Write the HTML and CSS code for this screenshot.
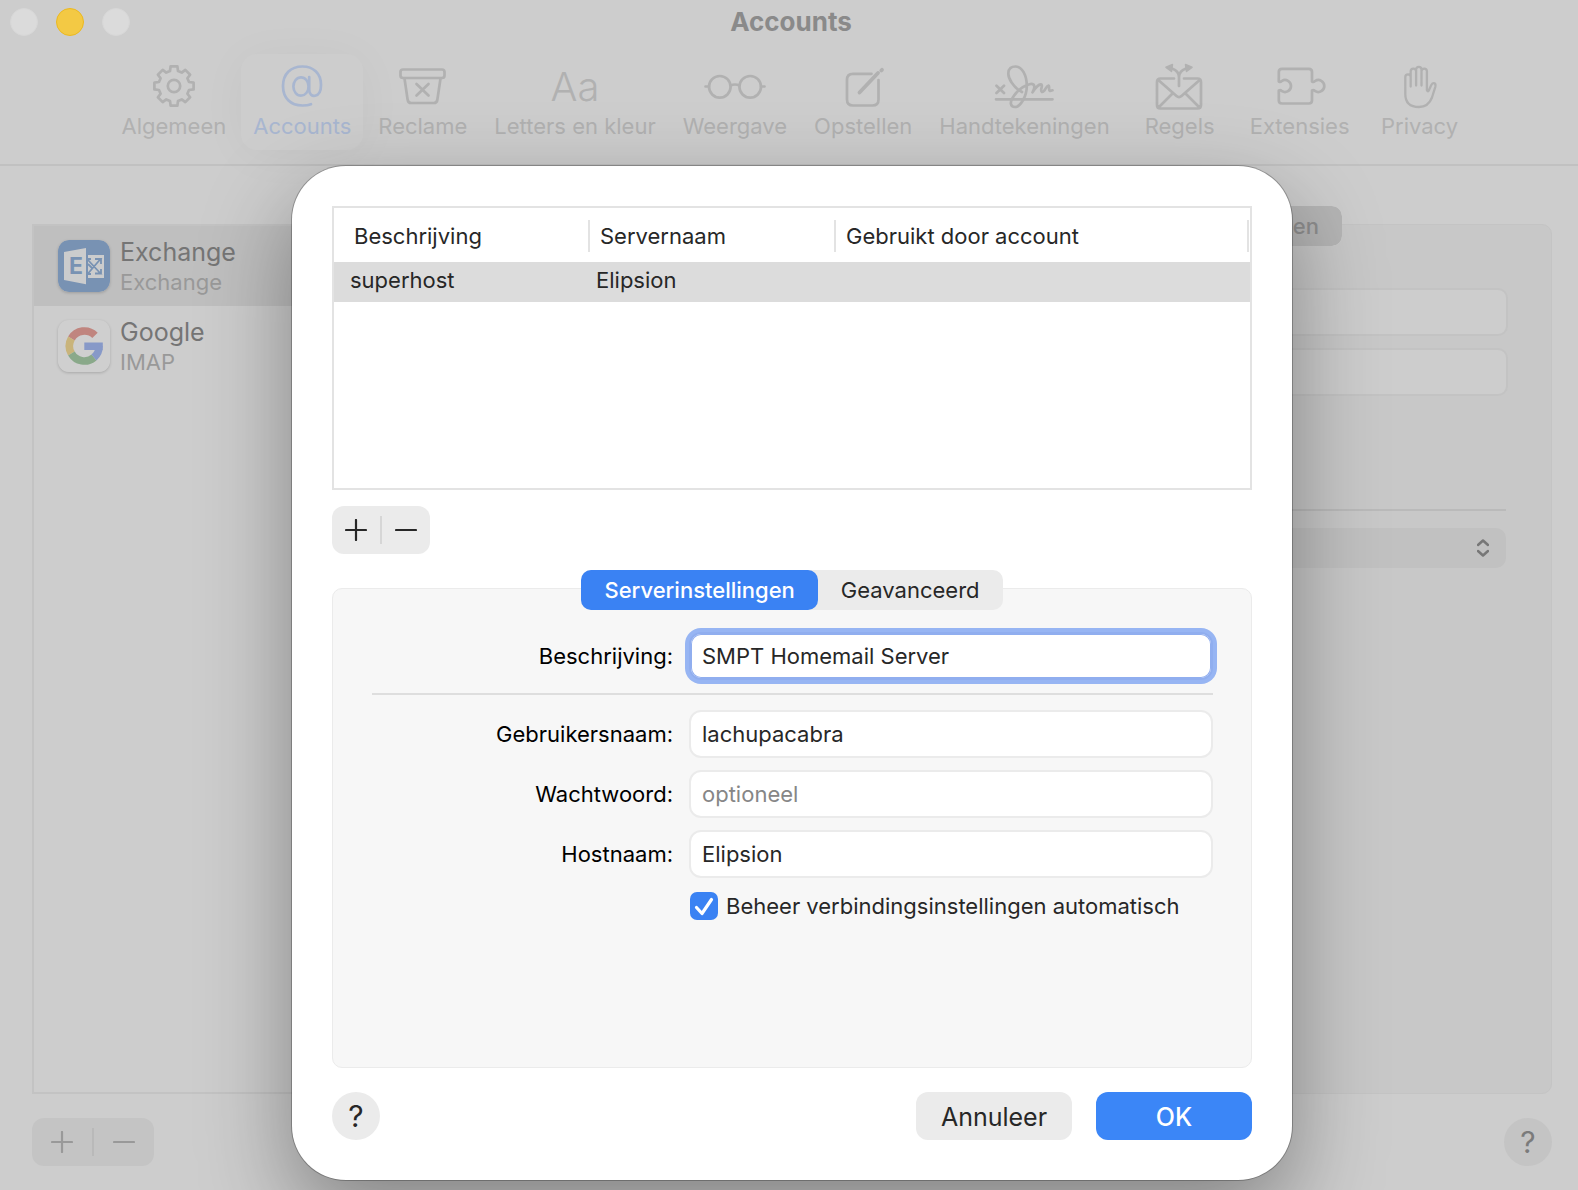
FILE: index.html
```html
<!DOCTYPE html>
<html lang="nl">
<head>
<meta charset="utf-8">
<meta name="viewport" content="width=device-width, initial-scale=1">
<title>Accounts</title>
<link rel="stylesheet" href="styles.css">
</head>
<body>
<div class="window">
  <header class="titlebar">
    <div class="lights">
      <span class="light"></span>
      <span class="light light-minimize"></span>
      <span class="light"></span>
    </div>
    <h1 class="title">Accounts</h1>
  </header>

  <nav class="toolbar">
    <button class="tool" type="button">
      <svg class="tool-icon" viewBox="0 0 64 48"><path d="M28.6 4.4H35.4L36 9L39.75 10.6L43.3 7.9L48.1 12.7L45.4 16.25L47 20L51.6 20.6V27.4L47 28L45.4 31.75L48.1 35.3L43.3 40.1L39.75 37.4L36 39L35.4 43.6H28.6L28 39L24.25 37.4L20.7 40.1L15.9 35.3L18.6 31.75L17 28L12.4 27.4V20.6L17 20L18.6 16.25L15.9 12.7L20.7 7.9L24.25 10.6L28 9Z"/><circle cx="32" cy="24" r="6.2"/></svg>
      <span>Algemeen</span>
    </button>
    <button class="tool tool-active" type="button">
      <svg class="tool-icon" viewBox="0 0 64 48"><ellipse cx="31" cy="24.5" rx="7.6" ry="9.2"/><path d="M39.2 15V28C39.2 36.500 51 36.500 51 23C51 11 43 4.500 32.500 4.500C20.500 4.500 13 12 13 24C13 36 20.500 43.500 32.500 43.500C36 43.500 39 43 41 42.200"/></svg>
      <span>Accounts</span>
    </button>
    <button class="tool" type="button">
      <svg class="tool-icon" viewBox="0 0 64 48"><rect x="9.500" y="7.500" width="44" height="8.500" rx="2.500"/><path d="M13.500 16.500L16.600 37.500Q17 41 20.300 41H42.700Q46 41 46.400 37.500L49.500 16.500M25.500 22L37.500 33.500M37.500 22L25.500 33.500"/></svg>
      <span>Reclame</span>
    </button>
    <button class="tool" type="button">
      <span class="tool-icon tool-letters">Aa</span>
      <span>Letters en kleur</span>
    </button>
    <button class="tool" type="button">
      <svg class="tool-icon" viewBox="0 0 64 48"><circle cx="16.800" cy="24.800" r="10.800"/><circle cx="47.200" cy="24.800" r="10.800"/><path d="M27.500 23.500Q32 21.500 36.500 23.500M2.500 24.500H6M58 24.500H61.500"/></svg>
      <span>Weergave</span>
    </button>
    <button class="tool" type="button">
      <svg class="tool-icon" viewBox="0 0 64 48"><path d="M40.500 11.800H22Q16 11.800 16 17.800V37.500Q16 43.500 22 43.500H41.500Q47.500 43.500 47.500 37.500V18"/><path d="M28.500 30.500L47 11" stroke-width="3.800"/><path d="M50.300 8.500L51 7.800" stroke-width="3.800"/></svg>
      <span>Opstellen</span>
    </button>
    <button class="tool" type="button">
      <svg class="tool-icon" viewBox="0 0 64 48"><path d="M4 37.300H60.500M4.500 23.800L12 31M12 23.800L4.500 31"/><path d="M30 30C20.500 25 16.300 16 16.300 11.500C16.300 6.500 19.500 4.500 23.500 4.500C30 4.500 34.800 13 34.800 24C34.800 34 28.500 45 23 45C18 45 18 40 20.500 36C24.500 29.500 31 24 37.500 22.200C43 21 43.500 25 40.500 30.300C43.500 25.500 47.500 21.500 49.500 22.500C51 24.500 47.500 28.500 50 30C53 30.500 53.500 24 56.500 23.500C58 24 56 28 58 29L60.500 28.300"/></svg>
      <span>Handtekeningen</span>
    </button>
    <button class="tool" type="button">
      <svg class="tool-icon" viewBox="0 0 64 48"><path d="M26 16.500H12.500Q9 16.500 9 20V43Q9 46.500 12.500 46.500H49.500Q53 46.500 53 43V20Q53 16.500 49.500 16.500H36M10 17.800L28.500 34Q31 36.200 33.500 34L52 17.800M10.500 45.500L24.500 31.500M51.500 45.500L37.500 31.500M31 24V15Q31 9 24 6.500M31 15Q31 9 38 6.500"/><path class="solid" d="M18 5.300L24.500 2.500L23.500 9.500ZM44 5.300L37.500 2.500L38.500 9.500Z"/></svg>
      <span>Regels</span>
    </button>
    <button class="tool" type="button">
      <svg class="tool-icon" viewBox="0 0 64 48"><path d="M10.800 19V10Q10.800 6.800 14 6.800H40.800Q44 6.800 44 10V19.500Q46 20.500 47.300 18.800A6 6 0 1 1 47.300 29.200Q46 27.500 44 28.500V38.300Q44 41.500 40.800 41.500H14Q10.800 41.500 10.800 38.300V28.500Q12.800 27.500 14 29.200A6 6 0 1 0 14 18.800Q12.800 20.500 10.800 19.500Z"/></svg>
      <span>Extensies</span>
    </button>
    <button class="tool" type="button">
      <svg class="tool-icon" viewBox="0 0 64 48"><path stroke-width="2.300" d="M17.300 32V15A2.700 2.700 0 0 1 22.700 15V24.500M22.700 15V9.300A2.700 2.700 0 0 1 28.100 9.300V23.500M28.100 9.300V7.500A2.700 2.700 0 0 1 33.500 7.500V23.500M33.500 9.300A2.700 2.700 0 0 1 38.900 9.300V28Q39.900 30.500 41 28L43.300 23Q44.800 20.500 46.500 21.300Q48 22.200 47.300 24.800L44 35.500Q40.300 45 31 45Q17.300 45 17.300 32"/></svg>
      <span>Privacy</span>
    </button>
  </nav>

  <main class="content">
    <section class="sidebar">
      <ul class="accounts">
        <li class="account account-selected">
          <svg class="account-icon" viewBox="0 0 52 52"><rect width="52" height="52" rx="11" fill="#7892b3"/><path fill="#cbcccd" d="M6 12L28 8V44.300L6 40ZM30 15H46V38H30Z"/><text x="11" y="34" class="logo-letter">E</text><path fill="none" stroke="#7892b3" stroke-width="1.800" d="M30 20L42.500 33.500H37M43 29V34M30 33.500L42.500 19H37M43 24V18M30 24L34 28M33 19H30M33 34H30"/></svg>
          <div class="account-text"><span class="account-name">Exchange</span><span class="account-kind">Exchange</span></div>
        </li>
        <li class="account">
          <svg class="account-icon" viewBox="0 0 52 52"><rect width="52" height="52" rx="11" fill="#cfcfcf"/><g fill="none" stroke-width="7.600"><path stroke="#c0857f" d="M37 15.400A15 15 0 0 0 13.400 18.500"/><path stroke="#c9b47b" d="M13.400 18.500A15 15 0 0 0 13.400 33.500"/><path stroke="#8aa98a" d="M13.400 33.500A15 15 0 0 0 36 37.500"/><path stroke="#8799c8" d="M36 37.500A15 15 0 0 0 41.200 26.300M26.300 26.300H44.800"/></g></svg>
          <div class="account-text"><span class="account-name">Google</span><span class="account-kind">IMAP</span></div>
        </li>
      </ul>
      <div class="stepper stepper-wide">
        <button class="step" type="button" aria-label="Account toevoegen"><svg viewBox="0 0 22 22"><path d="M11 1V21M1 11H21"/></svg></button>
        <button class="step" type="button" aria-label="Account verwijderen"><svg viewBox="0 0 22 22"><path d="M1 11H21"/></svg></button>
      </div>
    </section>

    <section class="detail">
      <div class="tabs tabs-dim">
        <button class="tab tab-current" type="button" aria-label="Serverinstellingen">en</button>
      </div>
      <div class="detail-box">
        <input class="dim-field" type="text" aria-label="Gebruikersnaam" disabled>
        <input class="dim-field" type="text" aria-label="Wachtwoord" disabled>
        <hr class="dim-rule">
        <div class="dim-select-wrap">
          <select class="dim-select" aria-label="Uitgaande mail" disabled><option></option></select>
          <svg class="dim-chevrons" viewBox="0 0 12 18"><path d="M1 6L6 1.500L11 6M1 12L6 16.500L11 12"/></svg>
        </div>
      </div>
      <button class="help help-dim" type="button" aria-label="Help">?</button>
    </section>
  </main>
</div>

<div class="overlay">
  <form class="sheet">
    <div class="table-box">
      <table class="servers">
        <colgroup><col class="col-a"><col class="col-b"><col></colgroup>
        <thead>
          <tr><th><div class="head">Beschrijving</div></th><th><div class="head">Servernaam</div></th><th><div class="head">Gebruikt door account</div></th></tr>
        </thead>
        <tbody>
          <tr><td>superhost</td><td>Elipsion</td><td></td></tr>
        </tbody>
      </table>
    </div>

    <div class="stepper">
      <button class="step" type="button" aria-label="Server toevoegen"><svg viewBox="0 0 22 22"><path d="M11 1V21M1 11H21"/></svg></button>
      <button class="step" type="button" aria-label="Server verwijderen"><svg viewBox="0 0 22 22"><path d="M1 11H21"/></svg></button>
    </div>

    <div class="settings">
      <div class="tabs">
        <button class="tab tab-current" type="button">Serverinstellingen</button>
        <button class="tab" type="button">Geavanceerd</button>
      </div>
      <div class="group">
        <label class="label" for="description">Beschrijving:</label>
        <input class="field field-focus" id="description" type="text" value="SMPT Homemail Server">
        <hr class="rule">
        <label class="label" for="user">Gebruikersnaam:</label>
        <input class="field" id="user" type="text" value="lachupacabra">
        <label class="label" for="password">Wachtwoord:</label>
        <input class="field" id="password" type="password" placeholder="optioneel">
        <label class="label" for="host">Hostnaam:</label>
        <input class="field" id="host" type="text" value="Elipsion">
        <div class="check-row">
          <input class="check" id="auto" type="checkbox" checked>
          <label for="auto">Beheer verbindingsinstellingen automatisch</label>
        </div>
      </div>
    </div>

    <footer class="actions">
      <button class="help" type="button" aria-label="Help">?</button>
      <button class="button" type="button">Annuleer</button>
      <button class="button button-primary" type="button">OK</button>
    </footer>
  </form>
</div>
</body>
</html>
```
FILE: styles.css
```css
* {
  box-sizing: border-box;
}

body {
  margin: 0;
  position: relative;
  overflow-x: hidden;
  background: #cdcdcd;
  color: #272727;
  font: 22px/28px Inter, "Liberation Sans", sans-serif;
}

button,
input,
select {
  margin: 0;
  padding: 0;
  border: 0;
  background: none;
  color: inherit;
  font: inherit;
}

.window {
  display: flex;
  flex-direction: column;
  min-height: 100vh;
}

/* Title bar */

.titlebar {
  display: grid;
  grid-template-columns: 1fr auto 1fr;
  align-items: center;
  height: 44px;
  padding: 0 6px 0 10px;
}

.lights {
  display: flex;
  gap: 18px;
}

.light {
  width: 28px;
  height: 28px;
  border: 1px solid #d7d7d7;
  border-radius: 50%;
  background: #dbdbdb;
}

.light-minimize {
  border-color: #ecb920;
  background: #f3c944;
}

.title {
  margin: 0;
  color: #8a8a8a;
  font-size: 26px;
  font-weight: 700;
}

/* Toolbar */

.toolbar {
  display: flex;
  justify-content: center;
  gap: 3px;
  padding: 10px 4px 14px 10px;
  border-bottom: 2px solid #c1c1c1;
}

.tool {
  display: flex;
  flex-direction: column;
  align-items: center;
  gap: 2px;
  min-width: 110px;
  padding: 8px 12px 10px;
  border-radius: 16px;
  color: #b1b1b1;
  white-space: nowrap;
}

.tool-active {
  background: #cdcdcd;
  box-shadow: 0 4px 48px rgba(0, 0, 0, 0.04);
  color: #a8b6d0;
}

.tool-icon {
  width: 64px;
  height: 48px;
  overflow: visible;
  fill: none;
  stroke: currentColor;
  stroke-width: 2.7;
  stroke-linecap: round;
  stroke-linejoin: round;
}

.tool-icon .solid {
  fill: currentColor;
  stroke-width: 1.5;
}

.tool-letters {
  font-size: 40px;
  font-weight: 300;
  line-height: 50px;
}

/* Account list */

.content {
  display: flex;
  flex: 1;
  gap: 40px;
  padding: 40px 26px 24px 32px;
}

.sidebar {
  display: flex;
  flex-direction: column;
  gap: 24px;
  width: 400px;
  padding-top: 18px;
}

.accounts {
  flex: 1;
  margin: 0;
  padding: 0;
  border: 2px solid #c3c3c3;
  list-style: none;
}

.account {
  display: flex;
  align-items: center;
  gap: 10px;
  height: 80px;
  padding: 0 24px;
}

.account-selected {
  background: #bfbfbf;
}

.account-icon {
  width: 52px;
  height: 52px;
  border-radius: 11px;
  box-shadow: 0 1px 3px rgba(0, 0, 0, 0.18);
}

.logo-letter {
  fill: #7892b3;
  font: 700 23px Inter, sans-serif;
}

.account-text {
  display: flex;
  flex-direction: column;
}

.account-name {
  color: #757575;
  font-size: 25px;
  line-height: 32px;
}

.account-kind {
  color: #999;
}

/* Add and remove control */

.stepper {
  display: flex;
  align-self: flex-start;
  align-items: center;
  width: 98px;
  height: 48px;
  border-radius: 12px;
  background: #ebebeb;
  color: #272727;
}

.step {
  display: flex;
  flex: 1;
  align-items: center;
  justify-content: center;
  height: 28px;
}

.step + .step {
  border-left: 2px solid #d6d6d6;
}

.step svg {
  width: 22px;
  height: 22px;
  fill: none;
  stroke: currentColor;
  stroke-width: 2.2;
  stroke-linecap: round;
}

.stepper-wide {
  width: 122px;
  background: #c4c4c4;
  color: #999;
}

.stepper-wide .step + .step {
  border-color: #b9b9b9;
}

/* Account detail behind the sheet */

.detail {
  display: flex;
  flex: 1;
  flex-direction: column;
}

.detail-box {
  display: flex;
  flex: 1;
  flex-direction: column;
  gap: 12px;
  padding: 63px 43px 40px;
  border: 1px solid #c4c4c4;
  border-radius: 10px;
  background: #c8c8c8;
}

.dim-field {
  width: 100%;
  height: 48px;
  border: 2px solid #c3c3c3;
  border-radius: 10px;
  background: #cdcdcd;
}

.dim-rule {
  height: 2px;
  margin: 101px 2px 5px 0;
  border: 0;
  background: #bababa;
}

.dim-select-wrap {
  display: grid;
  align-items: center;
  margin-right: 2px;
}

.dim-select {
  grid-area: 1 / 1;
  height: 40px;
  border-radius: 10px;
  background: #c1c1c1;
  appearance: none;
  opacity: 1;
}

.dim-chevrons {
  grid-area: 1 / 1;
  justify-self: end;
  width: 12px;
  height: 18px;
  margin-right: 17px;
  fill: none;
  stroke: #777;
  stroke-width: 2.5;
  stroke-linecap: round;
  stroke-linejoin: round;
}

/* Segmented tabs, straddling the top edge of the box below them */

.tabs {
  position: relative;
  display: flex;
  align-self: center;
  margin-bottom: -22px;
  border-radius: 10px;
  background: #ebebeb;
}

.tab {
  height: 40px;
  padding: 0 23px;
  border-radius: 10px;
}

.tab-current {
  background: #3a82f3;
  color: #fff;
  font-weight: 500;
}

.tabs-dim {
  align-self: flex-end;
  width: 232px;
  margin-right: 210px;
}

.tabs-dim .tab-current {
  width: 100%;
  background: #b5b5b5;
  color: #8e8e8e;
  text-align: right;
}

/* Sheet */

.overlay {
  position: absolute;
  inset: 0;
  display: flex;
  justify-content: center;
  padding: 166px 26px 10px 32px;
}

.sheet {
  display: flex;
  flex-direction: column;
  gap: 16px;
  width: 100%;
  max-width: 1000px;
  padding: 40px;
  border-radius: 54px;
  background: #fff;
  box-shadow: 0 0 0 1px rgba(0, 0, 0, 0.25), 0 36px 90px rgba(0, 0, 0, 0.36);
}

.table-box {
  height: 284px;
  border: 2px solid #e3e3e3;
}

.servers {
  width: 100%;
  border-collapse: collapse;
  table-layout: fixed;
}

.col-a {
  width: 256px;
}

.col-b {
  width: 246px;
}

.servers th {
  padding: 12px 0 10px;
  font-weight: 400;
  text-align: left;
}

.head {
  padding-left: 10px;
  border-right: 2px solid #e3e3e3;
  line-height: 32px;
}

th:first-child .head {
  padding-left: 20px;
}

th:last-child .head {
  margin-right: 1px;
}

.servers td {
  height: 40px;
  padding: 0 0 4px 6px;
  background: #dcdcdc;
}

.servers td:first-child {
  padding-left: 16px;
}

.settings {
  display: flex;
  flex: 1;
  flex-direction: column;
}

.group {
  display: grid;
  flex: 1;
  grid-template-columns: 1fr 524px;
  align-content: start;
  align-items: center;
  gap: 12px 16px;
  padding: 43px 38px 40px 39px;
  border: 1px solid #ebebeb;
  border-radius: 10px;
  background: #f7f7f7;
}

.label {
  color: #000;
  text-align: right;
}

.field {
  width: 100%;
  height: 48px;
  padding: 0 11px;
  border: 2px solid #ebebeb;
  border-radius: 12px;
  outline: 0;
  background: #fff;
}

.field::placeholder {
  color: #868686;
  opacity: 1;
}

.field-focus {
  border-color: #90aeef;
  box-shadow: 0 0 0 4px #97b5f3, inset 0 0 0 1px #90aeef;
}

.rule {
  grid-column: 1 / -1;
  width: 100%;
  height: 2px;
  margin: 1px 0 3px;
  border: 0;
  background: #dedede;
}

.check-row {
  display: flex;
  grid-column: 2;
  gap: 8px;
  padding: 2px 1px;
}

.check {
  width: 28px;
  height: 28px;
  border-radius: 7px;
  background: #3a82f3 url("data:image/svg+xml,%3Csvg xmlns='http://www.w3.org/2000/svg' viewBox='0 0 28 28'%3E%3Cpath d='M6.500 15.500L12 21.500L21.500 7.500' fill='none' stroke='white' stroke-width='3.200' stroke-linecap='round' stroke-linejoin='round'/%3E%3C/svg%3E") center / 28px;
  appearance: none;
}

.actions {
  display: flex;
  gap: 24px;
  margin-top: 8px;
}

.help {
  width: 48px;
  height: 48px;
  margin-right: auto;
  border-radius: 50%;
  background: #ebebeb;
  font-size: 30px;
}

.help-dim {
  margin: 24px 0 0 auto;
  background: #c4c4c4;
  color: #7b7b7b;
}

.button {
  width: 156px;
  height: 48px;
  padding-top: 1px;
  border-radius: 12px;
  background: #ebebeb;
  font-size: 25px;
}

.button-primary {
  background: #3b86f7;
  color: #fff;
  font-weight: 500;
}
```
